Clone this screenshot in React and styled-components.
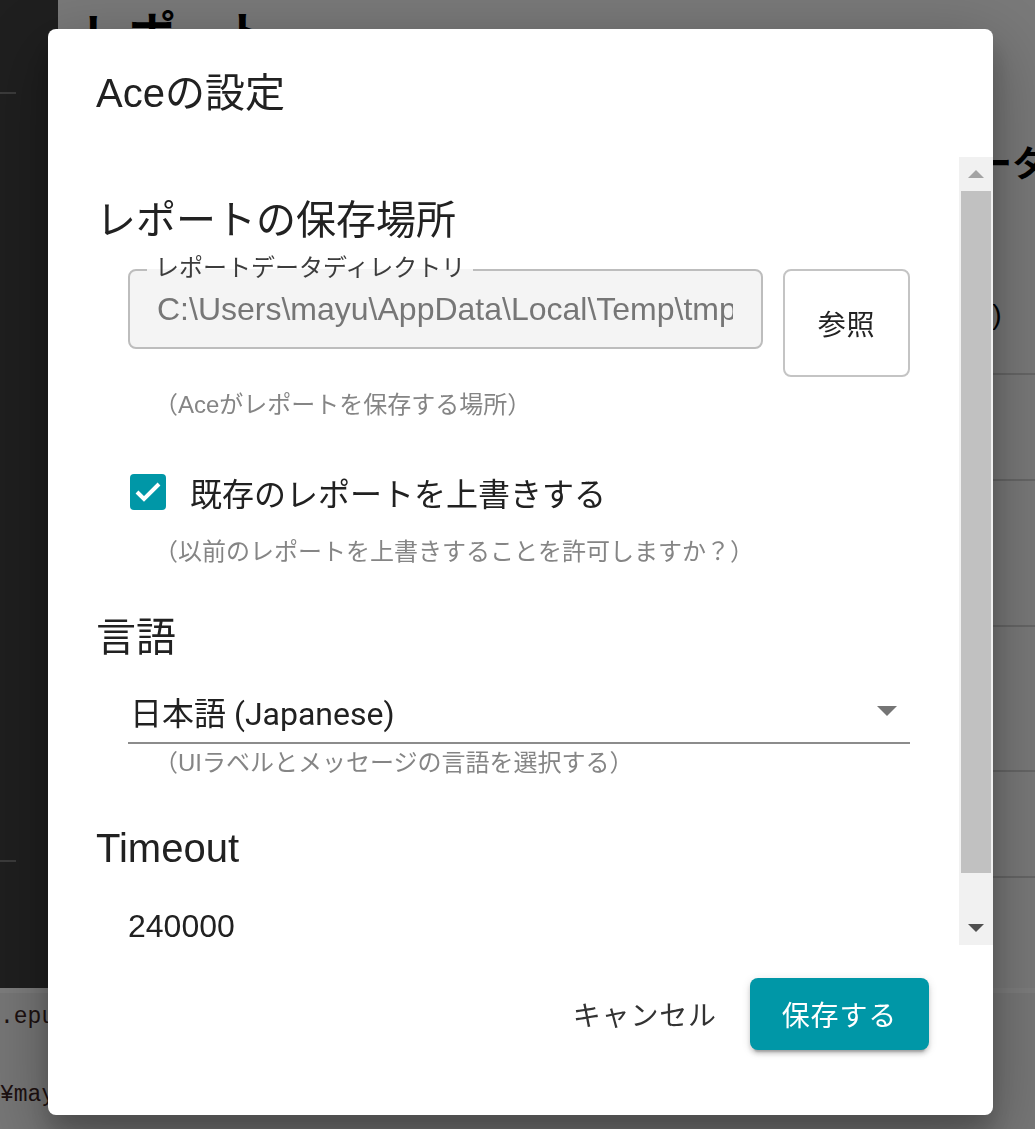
import React from 'react'
import styled, { createGlobalStyle } from 'styled-components'

const GlobalStyle = createGlobalStyle`
  html, body {
    margin: 0;
    padding: 0;
  }
  body {
    font-family: "Liberation Sans", "Noto Sans CJK JP", sans-serif;
    overflow: hidden;
  }
  * {
    box-sizing: border-box;
  }
`

// ---- app behind the dialog ----

const Page = styled.div`
  width: 1035px;
  height: 1129px;
  display: flex;
  flex-direction: column;
  background: #f2f2f2;
  overflow: hidden;
`

const Workspace = styled.div`
  display: flex;
  height: 988px;
`

const Sidebar = styled.nav`
  flex: 0 0 58px;
  background: #3e3e3e;
  padding-top: 92px;
`

const SideRule = styled.div`
  width: 16px;
  height: 2px;
  background: #777;
  margin-bottom: ${p => p.$gap || 0}px;
`

const Main = styled.main`
  flex: 1;
  min-width: 0;
  padding: 8px 0 0 22px;
`

const PageTitle = styled.h1`
  margin: 0;
  font-size: 48px;
  line-height: 56px;
  font-weight: 700;
  color: #000;
`

const Columns = styled.div`
  display: grid;
  grid-template-columns: 716px 1fr;
  margin-top: 77px;
`

const DataHeading = styled.h2`
  margin: 0;
  font-size: 36px;
  line-height: 48px;
  font-weight: 700;
  color: #000;
  white-space: nowrap;
`

const DataRow = styled.div`
  height: ${p => p.$h}px;
  border-bottom: 2px solid #cccccc;
  padding: ${p => p.$pad || 0}px 0 0 6px;
  font-size: 28px;
  line-height: 28px;
  color: #000;
  white-space: nowrap;
`

const LogPanel = styled.section`
  flex: 1;
  background: #eeeeee;
  border-top: 5px solid #fafafa;
  padding-top: 5px;
  font-family: "Liberation Mono", monospace;
  font-size: 23px;
  line-height: 39px;
  color: #3a2222;
  white-space: pre;
`

// ---- dialog ----

const Backdrop = styled.div`
  position: fixed;
  inset: 0;
  background: rgba(0, 0, 0, 0.5);
  padding: 29px 0 0 48px;
`

const Dialog = styled.div`
  width: 945px;
  height: 1086px;
  background: #fff;
  border-radius: 8px;
  display: flex;
  flex-direction: column;
  overflow: hidden;
  box-shadow: 0 22px 70px 8px rgba(0, 0, 0, 0.25), 0 18px 24px rgba(0, 0, 0, 0.2);
`

const DialogTitle = styled.h2`
  margin: 0;
  padding: 32px 48px;
  font-size: 40px;
  line-height: 64px;
  font-weight: 400;
  color: #212121;
`

const ScrollArea = styled.div`
  display: flex;
  height: 788px;
`

const Body = styled.div`
  flex: 1;
  min-width: 0;
  overflow: hidden;
  padding: 0 49px 0 48px;
`

const SectionHeading = styled.h3`
  margin: ${p => p.$top}px 0 0;
  font-size: 40px;
  line-height: 48px;
  font-weight: 400;
  color: #212121;
`

const FieldRow = styled.div`
  display: flex;
  align-items: flex-start;
  gap: 20px;
  margin: 25px 0 0 32px;
`

const OutlinedField = styled.div`
  position: relative;
  flex: 1;
  min-width: 0;
  height: 80px;
  border: 2px solid #bdbdbd;
  border-radius: 8px;
  background: #f4f4f4;
  display: flex;
  align-items: center;
  padding: 0 28px 0 27px;
`

const FieldLabel = styled.span`
  position: absolute;
  left: 17px;
  top: -16px;
  padding: 0 8px;
  font-size: 24px;
  line-height: 26px;
  color: #3c3c3c;
  background: linear-gradient(#fff 0 55%, #f4f4f4 55% 100%);
  white-space: nowrap;
`

const FieldValue = styled.div`
  flex: 1;
  min-width: 0;
  overflow: hidden;
  white-space: nowrap;
  font-size: 32px;
  line-height: 40px;
  color: #767676;
`

const OutlineButton = styled.button`
  flex: 0 0 127px;
  height: 108px;
  border: 2px solid #c4c4c4;
  border-radius: 8px;
  background: #fff;
  font-family: inherit;
  font-size: 28px;
  letter-spacing: 0.8px;
  color: #222;
  white-space: nowrap;
`

const Helper = styled.p`
  margin: ${p => p.$top}px 0 0 58px;
  font-size: 24px;
  line-height: 24px;
  color: #858585;
  white-space: nowrap;
`

const CheckRow = styled.label`
  display: flex;
  align-items: center;
  gap: 24px;
  height: 40px;
  margin: 55px 0 0 34px;
  font-size: 32px;
  color: #212121;
`

const CheckBox = styled.span`
  width: 36px;
  height: 36px;
  border-radius: 4px;
  background: #0097a7;
  display: flex;
`

const Select = styled.div`
  display: flex;
  align-items: center;
  justify-content: space-between;
  height: 64px;
  margin: 19px 0 0 32px;
  padding: 0 13px 0 2px;
  border-bottom: 2px solid #8c8c8c;
  font-family: Roboto, "Noto Sans CJK JP", sans-serif;
  font-size: 32px;
  color: #212121;
`

const SelectArrow = styled.span`
  width: 0;
  height: 0;
  border-left: 10px solid transparent;
  border-right: 10px solid transparent;
  border-top: 10px solid #757575;
`

const PlainInput = styled.div`
  margin: 34px 0 0 32px;
  padding-bottom: 11px;
  border-bottom: 2px solid #8c8c8c;
  font-size: 32px;
  line-height: 40px;
  color: #212121;
`

const Scrollbar = styled.div`
  flex: 0 0 34px;
  background: #f1f1f1;
  display: flex;
  flex-direction: column;
`

const ScrollButton = styled.div`
  height: 34px;
  display: flex;
  align-items: center;
  justify-content: center;
`

const ScrollArrow = styled.span`
  width: 0;
  height: 0;
  border-left: 8px solid transparent;
  border-right: 8px solid transparent;
  ${p => p.$up
    ? 'border-bottom: 8px solid #a3a3a3;'
    : 'border-top: 8px solid #505050;'}
`

const Track = styled.div`
  flex: 1;
`

const Thumb = styled.div`
  margin: 0 2px;
  height: 682px;
  background: #c1c1c1;
`

const Actions = styled.div`
  display: flex;
  justify-content: flex-end;
  align-items: center;
  gap: 17px;
  padding: 33px 64px 0 0;
`

const TextButton = styled.button`
  height: 72px;
  padding: 0 16px;
  border: 0;
  background: none;
  font-family: inherit;
  font-size: 28px;
  letter-spacing: 0.8px;
  color: #333;
`

const PrimaryButton = styled.button`
  height: 72px;
  padding: 0 32px;
  border: 0;
  border-radius: 8px;
  background: #0097a7;
  font-family: inherit;
  font-size: 28px;
  letter-spacing: 0.8px;
  color: #fff;
  box-shadow: 0 6px 2px -4px rgba(0, 0, 0, 0.2), 0 4px 4px 0 rgba(0, 0, 0, 0.14),
    0 2px 10px 0 rgba(0, 0, 0, 0.12);
`

export default function App() {
  return (
    <>
      <GlobalStyle />
      <Page>
        <Workspace>
          <Sidebar>
            <SideRule $gap={766} />
            <SideRule />
          </Sidebar>
          <Main>
            <PageTitle>レポート</PageTitle>
            <Columns>
              <div />
              <div>
                <DataHeading>レポートデータ</DataHeading>
                <DataRow $h={186} $pad={112}>保存日時 (Time)</DataRow>
                <DataRow $h={106} />
                <DataRow $h={146} />
                <DataRow $h={145} />
                <DataRow $h={106} />
              </div>
            </Columns>
          </Main>
        </Workspace>
        <LogPanel>
          {'.epub を読み込みました\n\n¥mayu¥AppData¥Local¥Temp'}
        </LogPanel>
      </Page>

      <Backdrop>
        <Dialog>
          <DialogTitle>Aceの設定</DialogTitle>
          <ScrollArea>
            <Body>
              <SectionHeading $top={39}>レポートの保存場所</SectionHeading>
              <FieldRow>
                <OutlinedField>
                  <FieldLabel>レポートデータディレクトリ</FieldLabel>
                  <FieldValue>C:\Users\mayu\AppData\Local\Temp\tmp-8c1f2a7d</FieldValue>
                </OutlinedField>
                <OutlineButton>参照</OutlineButton>
              </FieldRow>
              <Helper $top={16}>（Aceがレポートを保存する場所）</Helper>

              <CheckRow>
                <CheckBox>
                  <svg width="36" height="36" viewBox="0 0 36 36">
                    <polyline points="7,18 14,25 29,10" fill="none" stroke="#fff" strokeWidth="4" />
                  </svg>
                </CheckBox>
                既存のレポートを上書きする
              </CheckRow>
              <Helper $top={28}>（以前のレポートを上書きすることを許可しますか？）</Helper>

              <SectionHeading $top={49}>言語</SectionHeading>
              <Select>
                日本語 (Japanese)
                <SelectArrow />
              </Select>
              <Helper $top={7}>（UIラベルとメッセージの言語を選択する）</Helper>

              <SectionHeading $top={49}>Timeout</SectionHeading>
              <PlainInput>240000</PlainInput>
              <Helper $top={7}>（ミリ秒）</Helper>
            </Body>
            <Scrollbar>
              <ScrollButton><ScrollArrow $up /></ScrollButton>
              <Track><Thumb /></Track>
              <ScrollButton><ScrollArrow /></ScrollButton>
            </Scrollbar>
          </ScrollArea>
          <Actions>
            <TextButton>キャンセル</TextButton>
            <PrimaryButton>保存する</PrimaryButton>
          </Actions>
        </Dialog>
      </Backdrop>
    </>
  )
}
